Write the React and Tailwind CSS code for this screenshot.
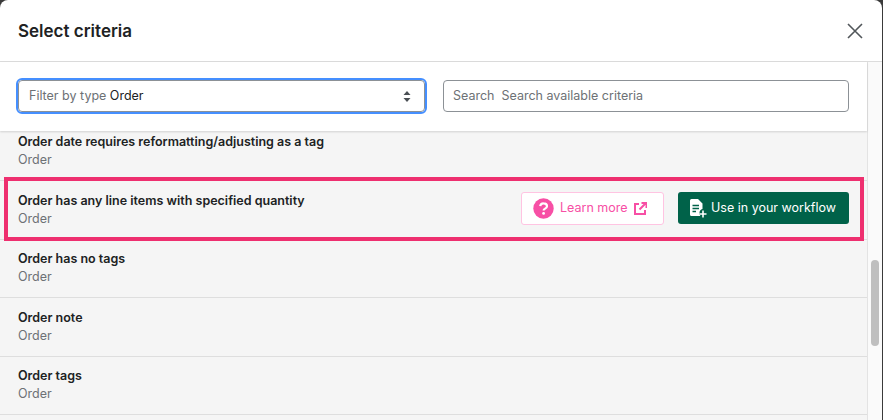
import React from "react";

function Row({ title, children }) {
  return (
    <div className="h-[58.5px] shrink-0 border-b border-[#dedede] pl-[18px] pr-[18px] flex items-center justify-between">
      <div className="flex flex-col">
        <span className="text-[12.5px] leading-[18px] font-semibold text-[#202223]">{title}</span>
        <span className="text-[12.5px] leading-[18px] text-[#6d7175]">Order</span>
      </div>
      {children}
    </div>
  );
}

function QuestionIcon() {
  return (
    <svg width="21" height="21" viewBox="0 0 21 21" className="shrink-0">
      <circle cx="10.5" cy="10.5" r="10.2" fill="#f74fa5" />
      <path d="M7.200 8.200a3.300 3.300 0 0 1 3.400-2.900c2 0 3.400 1.200 3.400 2.900 0 2.400-3.400 2.400-3.400 4.200" fill="none" stroke="#fff" strokeWidth="2.200" />
      <circle cx="10.600" cy="15.400" r="1.400" fill="#fff" />
    </svg>
  );
}

function OpenIcon() {
  return (
    <svg width="13" height="13" viewBox="0 0 13 13" fill="none" stroke="#f74fa5" strokeWidth="2" className="shrink-0">
      <path d="M5 2H1v10h10V8" />
      <path d="M5.500 7.500 11.500 1.500M7.500 1h5v5" />
    </svg>
  );
}

function DocPlusIcon() {
  return (
    <svg width="17" height="19" viewBox="0 0 17 19" className="shrink-0">
      <path d="M1.500 0H8l4.500 4.500V10a4 4 0 0 0-3 4c0 1.500.3 2.300 1 3H1.500A1.500 1.500 0 0 1 0 15.500v-14A1.500 1.500 0 0 1 1.500 0Z" fill="#fff" />
      <path d="M2.500 6.500h6.500M2.500 9.500h6.500M2.500 12.500h3.500" stroke="#006249" strokeWidth="1.400" />
      <path d="M13 11.500v7M9.500 15h7" stroke="#fff" strokeWidth="1.600" />
    </svg>
  );
}

export default function App() {
  return (
    <div className="relative h-[420px] w-[883px] overflow-hidden bg-[#3a3a3a] font-['Inter',sans-serif]">
      <div className="flex h-full w-[882px] flex-col overflow-hidden rounded-t-[8px] bg-white">
        <header className="flex h-[62px] shrink-0 items-center justify-between border-b border-[#dcdcdc] pl-[18px] pr-[19px]">
          <h1 className="text-[17px] leading-6 font-semibold text-[#202223]">Select criteria</h1>
          <svg width="16" height="16" viewBox="0 0 16 16" stroke="#51565a" strokeWidth="1.600" fill="none">
            <path d="M1 1l14 14M15 1 1 15" />
          </svg>
        </header>
        <div className="flex min-h-0 flex-1">
          <div className="relative flex w-[867px] shrink-0 flex-col">
            <div className="z-10 flex h-[69px] shrink-0 gap-[18px] bg-white pl-[18px] pr-[18px] pt-[18px] shadow-[0_1px_2px_rgba(0,0,0,0.15)]">
              <div className="flex h-[32px] w-[407px] items-center justify-between rounded-[4px] border border-[#8c9196] pl-[10px] pr-[13px] text-[12.5px] outline-2 outline-offset-[0px] outline-[#458fff]">
                <span><span className="text-[#6d7175]">Filter by type</span> <span className="text-[#202223]">Order</span></span>
                <svg width="8" height="11" viewBox="0 0 8 11" fill="#4a4f54"><path d="M4 0 7.500 4H.5ZM4 11 .5 7h7Z" /></svg>
              </div>
              <div className="flex h-[32px] w-[406px] items-center gap-[7px] rounded-[4px] border border-[#8c9196] pl-[9px] text-[12.5px] text-[#6d7175]">
                <span>Search</span>
                <span>Search available criteria</span>
              </div>
            </div>
            <div className="-mt-[8.5px] flex min-h-0 flex-1 flex-col overflow-hidden bg-[#f5f5f5]">
              <Row title="Order date requires reformatting/adjusting as a tag" />
              <Row title="Order has any line items with specified quantity">
                <div className="flex items-center gap-[14px] pb-[3px]">
                  <div className="flex h-[33px] w-[143px] items-center gap-[6px] rounded-[3px] border border-[#ffc4e2] bg-white pl-[11px] text-[12.5px] text-[#f74fa5]">
                    <QuestionIcon />
                    <span>Learn more</span>
                    <OpenIcon />
                  </div>
                  <div className="flex h-[32px] w-[171px] items-center gap-[4px] rounded-[3px] bg-[#006249] pl-[12px] text-[12.5px] text-white">
                    <DocPlusIcon />
                    <span>Use in your workflow</span>
                  </div>
                </div>
              </Row>
              <Row title="Order has no tags" />
              <Row title="Order note" />
              <Row title="Order tags" />
            </div>
            <div className="absolute left-[4px] top-[115px] h-[64px] w-[860px] border-[4px] border-[#ee2f6f]" />
          </div>
          <div className="flex-1 border-l border-[#e3e3e3] bg-[#fafafa] pl-[3px] pt-[198px]">
            <div className="h-[86px] w-[8px] rounded-full bg-[#bfbfbf]" />
          </div>
        </div>
      </div>
    </div>
  );
}
